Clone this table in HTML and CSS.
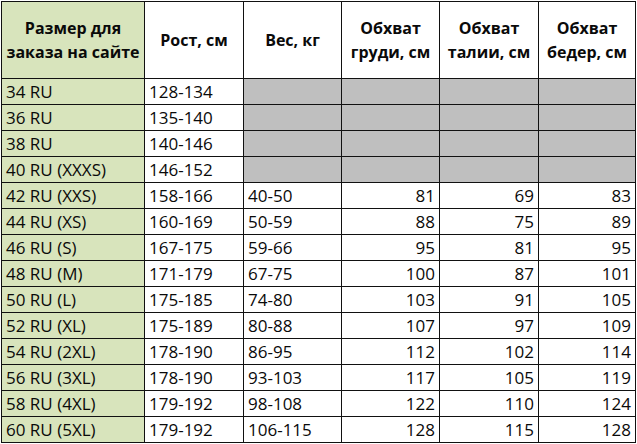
FILE: index.html
```html
<!DOCTYPE html>
<html lang="ru">
<head>
<meta charset="utf-8">
<link rel="stylesheet" href="styles.css">
</head>
<body>
<table class="sizes">
  <colgroup>
    <col class="c1"><col class="c2"><col class="c3"><col class="c4"><col class="c5"><col class="c6">
  </colgroup>
  <thead>
    <tr>
      <th class="size">Размер для<br>заказа на сайте</th>
      <th>Рост, см</th>
      <th>Вес, кг</th>
      <th>Обхват<br>груди, см</th>
      <th>Обхват<br>талии, см</th>
      <th>Обхват<br>бедер, см</th>
    </tr>
  </thead>
  <tbody>
    <tr><td class="size">34 RU</td><td>128-134</td><td class="na"></td><td class="na"></td><td class="na"></td><td class="na"></td></tr>
    <tr><td class="size">36 RU</td><td>135-140</td><td class="na"></td><td class="na"></td><td class="na"></td><td class="na"></td></tr>
    <tr><td class="size">38 RU</td><td>140-146</td><td class="na"></td><td class="na"></td><td class="na"></td><td class="na"></td></tr>
    <tr><td class="size">40 RU (XXXS)</td><td>146-152</td><td class="na"></td><td class="na"></td><td class="na"></td><td class="na"></td></tr>
    <tr><td class="size">42 RU (XXS)</td><td>158-166</td><td>40-50</td><td class="num">81</td><td class="num">69</td><td class="num">83</td></tr>
    <tr><td class="size">44 RU (XS)</td><td>160-169</td><td>50-59</td><td class="num">88</td><td class="num">75</td><td class="num">89</td></tr>
    <tr><td class="size">46 RU (S)</td><td>167-175</td><td>59-66</td><td class="num">95</td><td class="num">81</td><td class="num">95</td></tr>
    <tr><td class="size">48 RU (M)</td><td>171-179</td><td>67-75</td><td class="num">100</td><td class="num">87</td><td class="num">101</td></tr>
    <tr><td class="size">50 RU (L)</td><td>175-185</td><td>74-80</td><td class="num">103</td><td class="num">91</td><td class="num">105</td></tr>
    <tr><td class="size">52 RU (XL)</td><td>175-189</td><td>80-88</td><td class="num">107</td><td class="num">97</td><td class="num">109</td></tr>
    <tr><td class="size">54 RU (2XL)</td><td>178-190</td><td>86-95</td><td class="num">112</td><td class="num">102</td><td class="num">114</td></tr>
    <tr><td class="size">56 RU (3XL)</td><td>178-190</td><td>93-103</td><td class="num">117</td><td class="num">105</td><td class="num">119</td></tr>
    <tr><td class="size">58 RU (4XL)</td><td>179-192</td><td>98-108</td><td class="num">122</td><td class="num">110</td><td class="num">124</td></tr>
    <tr><td class="size">60 RU (5XL)</td><td>179-192</td><td>106-115</td><td class="num">128</td><td class="num">115</td><td class="num">128</td></tr>
  </tbody>
</table>
</body>
</html>
```
FILE: styles.css
```css
html, body {
  margin: 0;
  padding: 0;
  background: #ffffff;
}
body {
  padding: 1px 0 0 1px;
  font-family: "Open Sans", "Noto Sans", sans-serif;
  color: #0a0a0a;
}
.sizes {
  border-collapse: collapse;
  table-layout: fixed;
  width: 634px;
}
.c1 { width: 143px; }
.c2 { width: 99px; }
.c3 { width: 98px; }
.c4 { width: 98px; }
.c5 { width: 99px; }
.c6 { width: 97px; }
.sizes th, .sizes td {
  border: 1px solid #111;
  padding: 0 3px 0 4px;
  white-space: nowrap;
  overflow: hidden;
}
.sizes th {
  height: 76px;
  padding: 0 2px;
  font-size: 16px;
  font-weight: 700;
  line-height: 24px;
  text-align: center;
  background: #ffffff;
}
.sizes td {
  height: 25px;
  font-size: 17px;
  line-height: 25px;
  text-align: left;
}
.sizes .size {
  background: #d8e4bc;
}
.sizes .na {
  background: #bfbfbf;
}
.sizes .num {
  text-align: right;
  padding-right: 4px;
}
```
